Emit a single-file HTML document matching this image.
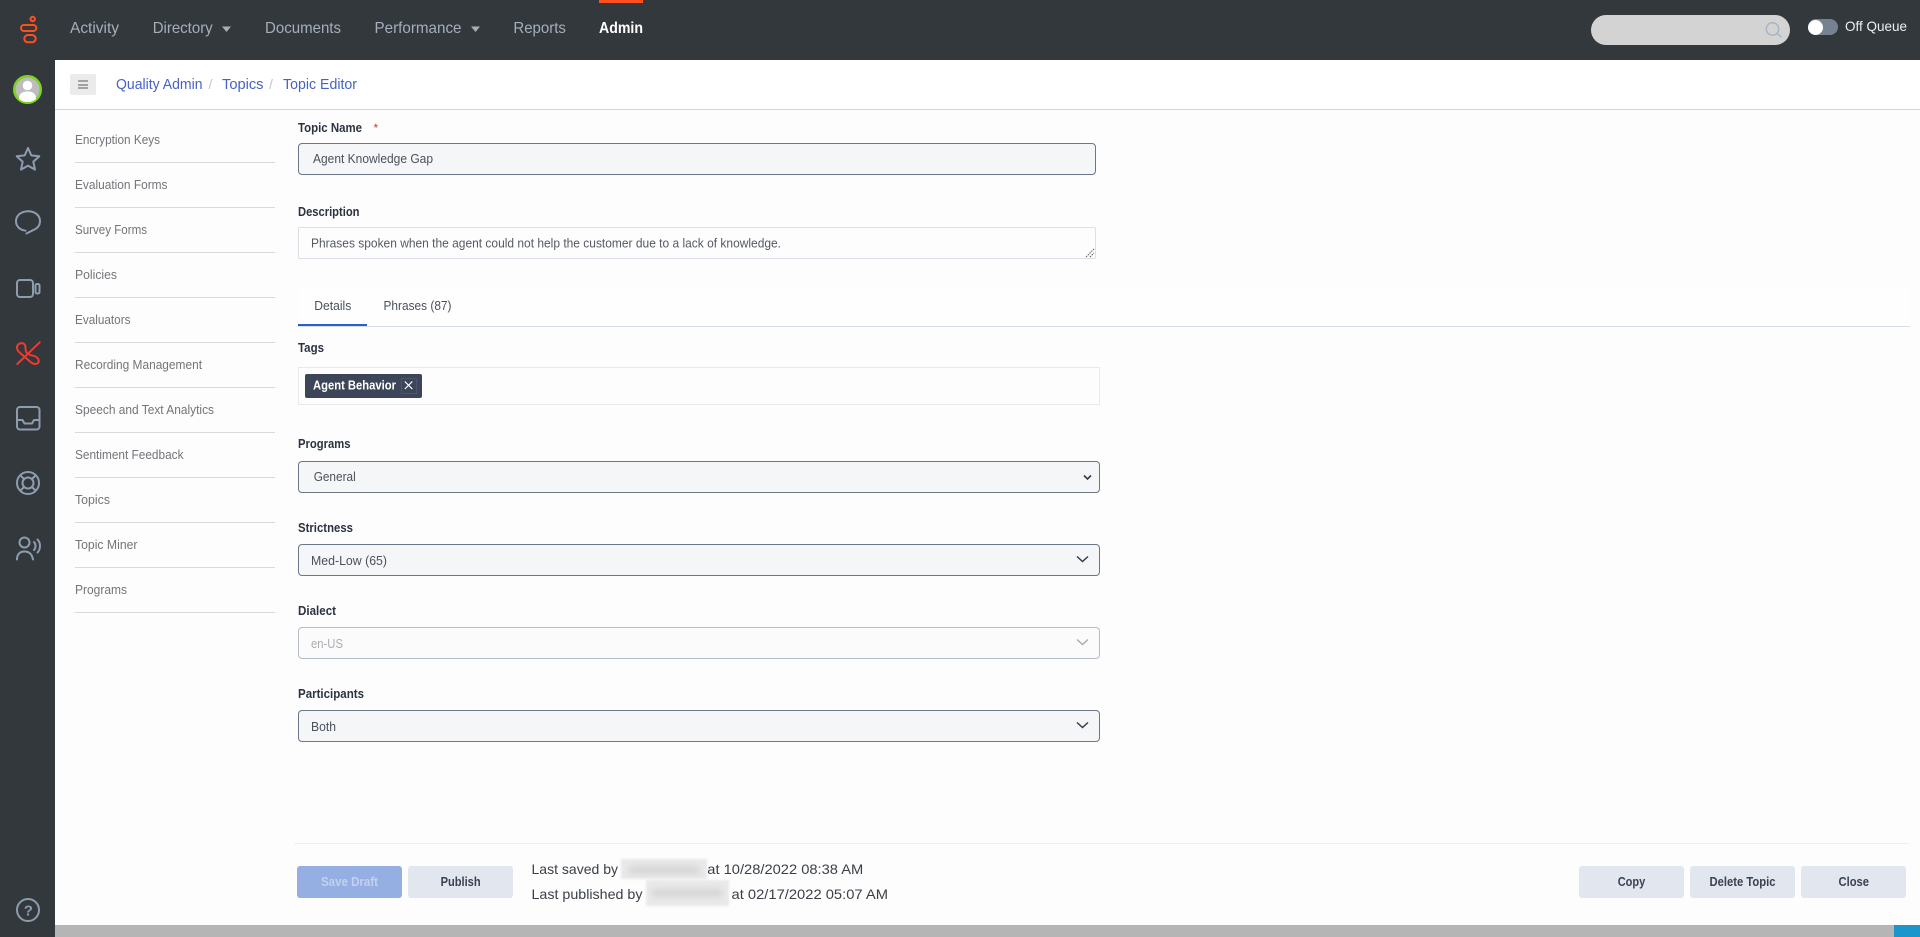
<!DOCTYPE html>
<html lang="en">
<head>
<meta charset="utf-8">
<title>Topic Editor</title>
<style>
html,body{margin:0;padding:0;width:1920px;height:937px;overflow:hidden;background:#fdfdfd;font-family:"Liberation Sans",sans-serif}
div{position:absolute;box-sizing:border-box}
#top{left:0;top:0;width:1920px;height:60px;background:#33383d}
#side{left:0;top:0;width:55px;height:937px;background:#33383d}
#crumb{left:55px;top:60px;width:1865px;height:50px;background:#fff;border-bottom:1px solid #d5d5d5}
.ln{left:75px;width:200px;height:1px;background:#d9d9d9}
.inp{left:298px;width:802px;height:32px;background:#f5f6f8;border:1.5px solid #6c7688;border-radius:4px}
svg{position:absolute;left:0;top:0}
text{font-family:"Liberation Sans",sans-serif}
.nav{font-size:16px;fill:#a4afba}
.bc{font-size:14.5px;fill:#4563c4}
.m{font-size:13px;fill:#74747a}
.l{font-size:12.5px;font-weight:700;fill:#2c3340}
.v{font-size:13px;fill:#4a505c}
.b{font-size:12.5px;font-weight:700;fill:#3a4150;text-anchor:start}
.f{font-size:14px;fill:#3b4048}
.i{fill:none;stroke:#8d9dae;stroke-width:2;stroke-linecap:round;stroke-linejoin:round}
</style>
</head>
<body>
<div id="top"></div>
<div id="side"></div>
<div id="crumb"></div>
<div style="left:599px;top:0;width:44px;height:3px;background:#ff4f1f"></div>
<div style="left:1591px;top:15px;width:199px;height:30px;border-radius:15px;background:#d3d3d3"></div>
<div style="left:1808px;top:19px;width:30px;height:16px;border-radius:8px;background:#76828f"></div>
<div style="left:1808px;top:19.5px;width:15px;height:15px;border-radius:50%;background:#fff"></div>
<div style="left:70px;top:74px;width:26px;height:21px;background:#ebebeb;border-radius:2px"></div>
<div style="left:78px;top:80px;width:10px;height:2px;background:#a3a3a3"></div>
<div style="left:78px;top:83.5px;width:10px;height:2px;background:#a3a3a3"></div>
<div style="left:78px;top:87px;width:10px;height:2px;background:#a3a3a3"></div>

<div class="ln" style="top:162px"></div><div class="ln" style="top:207px"></div><div class="ln" style="top:252px"></div><div class="ln" style="top:297px"></div><div class="ln" style="top:342px"></div><div class="ln" style="top:387px"></div><div class="ln" style="top:432px"></div><div class="ln" style="top:477px"></div><div class="ln" style="top:522px"></div><div class="ln" style="top:567px"></div><div class="ln" style="top:612px"></div>

<div class="inp" style="top:143px;width:798px"></div>
<div class="inp" style="top:227px;width:798px;height:31.5px;background:#fdfdfe;border-color:#dcdfe8;border-radius:2px"></div>
<div style="left:298px;top:286px;width:1612px;height:40px;background:#fefefe"></div>
<div style="left:298px;top:326px;width:1612px;height:1px;background:#d8dee8"></div>
<div style="left:298px;top:324px;width:69px;height:2px;background:#2a60c8"></div>
<div style="left:298px;top:367px;width:802px;height:38px;border:1px solid #e8e9ef"></div>
<div style="left:305px;top:374px;width:117px;height:24px;background:#3c4658;border-radius:2px"></div>
<div style="left:401px;top:378px;width:16px;height:16px;border:1px solid #4d5769"></div>
<div class="inp" style="top:461px"></div>
<div class="inp" style="top:544px"></div>
<div class="inp" style="top:627px;background:#fbfbfc;border:1px solid #b6bcc6"></div>
<div class="inp" style="top:710px"></div>

<div style="left:294px;top:843px;width:1615px;height:1px;background:#eeeff1"></div>
<div style="left:297px;top:866px;width:105px;height:32px;background:#96afe3;border-radius:3px"></div>
<div style="left:408px;top:866px;width:105px;height:32px;background:#e2e6ef;border-radius:3px"></div>
<div style="left:1579px;top:866px;width:105px;height:32px;background:#e2e6ef;border-radius:3px"></div>
<div style="left:1690px;top:866px;width:105px;height:32px;background:#e2e6ef;border-radius:3px"></div>
<div style="left:1801px;top:866px;width:105px;height:32px;background:#e2e6ef;border-radius:3px"></div>

<div style="left:621px;top:859px;width:86px;height:20px;background:#e9e9e9;filter:blur(1px)"></div>
<div style="left:629px;top:866px;width:70px;height:8px;background:#d6d6d6;filter:blur(3px)"></div>
<div style="left:646px;top:880px;width:83px;height:26px;background:#e9e9e9;filter:blur(1px)"></div>
<div style="left:652px;top:889px;width:70px;height:8px;background:#d6d6d6;filter:blur(3px)"></div>

<div style="left:55px;top:925px;width:1839px;height:12px;background:#b5b5b5"></div>
<div style="left:1894px;top:925px;width:26px;height:12px;background:#1a96cc"></div>

<svg width="1920" height="937" viewBox="0 0 1920 937" xmlns="http://www.w3.org/2000/svg">
<!-- logo -->
<g fill="none" stroke="#ff4f1f" stroke-width="2">
<circle cx="32.7" cy="19" r="2.2"/>
<rect x="21" y="25" width="15.3" height="6" rx="3"/>
<rect x="24.3" y="35" width="11.400" height="7.300" rx="3.600"/>
</g>
<!-- nav -->
<text class="nav" x="70" y="33" textLength="49" lengthAdjust="spacingAndGlyphs">Activity</text>
<text class="nav" x="152.7" y="33" textLength="60" lengthAdjust="spacingAndGlyphs">Directory</text>
<path d="M222 26.500h9l-4.500 5.500z" fill="#a4afba"/>
<text class="nav" x="265" y="33" textLength="76" lengthAdjust="spacingAndGlyphs">Documents</text>
<text class="nav" x="374.500" y="33" textLength="87" lengthAdjust="spacingAndGlyphs">Performance</text>
<path d="M471 26.500h9l-4.500 5.500z" fill="#a4afba"/>
<text class="nav" x="513.400" y="33" textLength="52.500" lengthAdjust="spacingAndGlyphs">Reports</text>
<text class="nav" x="599" y="33" textLength="44" lengthAdjust="spacingAndGlyphs" style="font-weight:700;fill:#fff">Admin</text>
<!-- search + toggle -->
<g fill="none" stroke="#a5b5c5" stroke-width="1.500"><circle cx="1772.500" cy="29" r="6.200"/><path d="M1777 33.500l4.500 3.500"/></g>
<text x="1845" y="31" textLength="62" lengthAdjust="spacingAndGlyphs" style="font-size:14px;fill:#eceff2">Off Queue</text>
<!-- sidebar icons -->
<circle cx="27.500" cy="89.500" r="13.200" fill="#bdbdbd" stroke="#7ed321" stroke-width="2.600"/>
<circle cx="27.500" cy="85.500" r="4.800" fill="#fff"/>
<path d="M19 99c0-6 4-7.500 8.500-7.500s8.500 1.500 8.500 7.500c-2.500 2-5 3-8.500 3s-6-1-8.500-3z" fill="#fff"/>
<path class="i" d="M28 148l3.300 7.400 8 .9-6 5.400 1.700 7.900-7-4-7 4 1.700-7.900-6-5.400 8-.9z"/>
<path class="i" d="M26.500 233.500l6.500-3.300c4.300-1.700 7-5 7-9.200 0-5.800-5.300-9.800-12-9.800s-12 4.200-12 10c0 4.500 3 7.800 7.300 9l2.200.5"/>
<rect class="i" x="17" y="280" width="16" height="17" rx="3"/>
<rect class="i" x="35.500" y="284" width="4" height="9.500" rx="1.500"/>
<path class="i" style="stroke:#f03a2e" d="M17.300 364L39.700 342.300M25.300 357.300C22 354.500 19.500 353 18 350.700 16.800 348.800 16.700 346.500 17.800 345 19.300 342.800 23.500 342.300 25 345 26 347 25.300 349 25.800 351 26.600 354 29.300 355 33 355.700 36 356.200 38.300 358 38.700 360.500 39 362.800 37 364.300 34.700 364 31.500 363.800 28.500 360 25.300 357.300Z"/>
<g class="i"><rect x="17" y="407" width="22.500" height="22.500" rx="3"/><path d="M17 420h5.500l2 3.500h7.500l2-3.500h5.500"/></g>
<g class="i"><circle cx="28" cy="483" r="11"/><circle cx="28" cy="483" r="5.500"/><path d="M20.500 475.500l3.500 3.500M35.500 475.500l-3.500 3.500M20.500 490.500l3.500-3.500M35.500 490.500l-3.500-3.500"/></g>
<g class="i"><circle cx="24.500" cy="542.500" r="5"/><path d="M17 559.500c0-5.500 3-8 7.500-8s7.500 2.500 8.500 8M34 542c2 2 2 6 0 8M37.500 539.500c3.300 3.300 3.300 9.700 0 13"/></g>
<circle class="i" cx="28" cy="910" r="11"/>
<text x="23.800" y="915.500" style="font-size:15px;font-weight:700;fill:#8d9dae">?</text>
<!-- breadcrumb -->
<text class="bc" x="116" y="89" textLength="86.500" lengthAdjust="spacingAndGlyphs">Quality Admin</text>
<text x="208.500" y="89" style="font-size:14px;fill:#c4c4c4">/</text>
<text class="bc" x="222" y="89" textLength="41.500" lengthAdjust="spacingAndGlyphs">Topics</text>
<text x="269" y="89" style="font-size:14px;fill:#c4c4c4">/</text>
<text class="bc" x="283" y="89" textLength="74" lengthAdjust="spacingAndGlyphs">Topic Editor</text>
<!-- menu -->
<text class="m" x="75" y="144" textLength="85" lengthAdjust="spacingAndGlyphs">Encryption Keys</text>
<text class="m" x="75" y="189" textLength="92.500" lengthAdjust="spacingAndGlyphs">Evaluation Forms</text>
<text class="m" x="75" y="234" textLength="72" lengthAdjust="spacingAndGlyphs">Survey Forms</text>
<text class="m" x="75" y="279" textLength="42" lengthAdjust="spacingAndGlyphs">Policies</text>
<text class="m" x="75" y="324" textLength="55.500" lengthAdjust="spacingAndGlyphs">Evaluators</text>
<text class="m" x="75" y="369" textLength="127" lengthAdjust="spacingAndGlyphs">Recording Management</text>
<text class="m" x="75" y="414" textLength="139" lengthAdjust="spacingAndGlyphs">Speech and Text Analytics</text>
<text class="m" x="75" y="459" textLength="108.500" lengthAdjust="spacingAndGlyphs">Sentiment Feedback</text>
<text class="m" x="75" y="504" textLength="35" lengthAdjust="spacingAndGlyphs">Topics</text>
<text class="m" x="75" y="549" textLength="62.500" lengthAdjust="spacingAndGlyphs">Topic Miner</text>
<text class="m" x="75" y="594" textLength="52" lengthAdjust="spacingAndGlyphs">Programs</text>
<!-- form -->
<text class="l" x="298" y="132" textLength="64" lengthAdjust="spacingAndGlyphs">Topic Name</text>
<text x="373.500" y="132" style="font-size:12px;fill:#e03030">*</text>
<text class="v" x="313" y="163" textLength="120" lengthAdjust="spacingAndGlyphs">Agent Knowledge Gap</text>
<text class="l" x="298" y="216" textLength="61.500" lengthAdjust="spacingAndGlyphs">Description</text>
<text class="v" x="311" y="247.300" textLength="470" lengthAdjust="spacingAndGlyphs" style="fill:#555a63">Phrases spoken when the agent could not help the customer due to a lack of knowledge.</text>
<path d="M1086 257l8-8M1090 257l4-4" stroke="#555" stroke-width="1" stroke-dasharray="1.500 1" fill="none"/>
<text class="v" x="314.300" y="310" textLength="37" lengthAdjust="spacingAndGlyphs">Details</text>
<text class="v" x="383.500" y="310" textLength="68" lengthAdjust="spacingAndGlyphs">Phrases (87)</text>
<text class="l" x="298" y="352" textLength="26" lengthAdjust="spacingAndGlyphs">Tags</text>
<text x="313" y="389.500" textLength="83" lengthAdjust="spacingAndGlyphs" style="font-size:12.500px;font-weight:700;fill:#fff">Agent Behavior</text>
<path d="M404.800 381.500l7.500 7.500M412.300 381.500l-7.500 7.500" stroke="#fff" stroke-width="1.200" fill="none"/>
<text class="l" x="298" y="448" textLength="52.500" lengthAdjust="spacingAndGlyphs">Programs</text>
<text class="v" x="313.700" y="481" textLength="42" lengthAdjust="spacingAndGlyphs">General</text>
<path d="M1084 475.500l3.500 3.500 3.500-3.500" stroke="#333d4f" stroke-width="1.600" fill="none"/>
<text class="l" x="298" y="532" textLength="55" lengthAdjust="spacingAndGlyphs">Strictness</text>
<text class="v" x="311" y="565" textLength="76" lengthAdjust="spacingAndGlyphs">Med-Low (65)</text>
<path d="M1077 556.500l5.500 5 5.500-5" stroke="#333d4f" stroke-width="1.500" fill="none"/>
<text class="l" x="298" y="615" textLength="38" lengthAdjust="spacingAndGlyphs">Dialect</text>
<text class="v" x="311" y="648" textLength="32" lengthAdjust="spacingAndGlyphs" style="fill:#a9adb4">en-US</text>
<path d="M1077 639.500l5.500 5 5.500-5" stroke="#a9adb4" stroke-width="1.500" fill="none"/>
<text class="l" x="298" y="698" textLength="66" lengthAdjust="spacingAndGlyphs">Participants</text>
<text class="v" x="311" y="731" textLength="25" lengthAdjust="spacingAndGlyphs">Both</text>
<path d="M1077 722.500l5.500 5 5.500-5" stroke="#333d4f" stroke-width="1.500" fill="none"/>
<!-- footer -->
<text class="b" x="321" y="886" textLength="57" lengthAdjust="spacingAndGlyphs" style="fill:#c3d0ef">Save Draft</text>
<text class="b" x="440.600" y="886" textLength="40" lengthAdjust="spacingAndGlyphs">Publish</text>
<text class="f" x="531.500" y="874" textLength="86.500" lengthAdjust="spacingAndGlyphs">Last saved by</text>
<text class="f" x="707.300" y="874" textLength="156" lengthAdjust="spacingAndGlyphs">at 10/28/2022 08:38 AM</text>
<text class="f" x="531.500" y="899" textLength="111" lengthAdjust="spacingAndGlyphs">Last published by</text>
<text class="f" x="731.500" y="899" textLength="156.500" lengthAdjust="spacingAndGlyphs">at 02/17/2022 05:07 AM</text>
<text class="b" x="1617.700" y="886" textLength="27.500" lengthAdjust="spacingAndGlyphs">Copy</text>
<text class="b" x="1709.500" y="886" textLength="66" lengthAdjust="spacingAndGlyphs">Delete Topic</text>
<text class="b" x="1838.500" y="886" textLength="30.500" lengthAdjust="spacingAndGlyphs">Close</text>
</svg>
</body>
</html>
